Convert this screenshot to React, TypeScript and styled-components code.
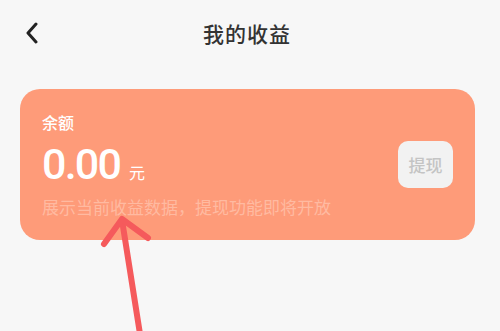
import React from "react";
import styled, { createGlobalStyle } from "styled-components";

const GlobalStyle = createGlobalStyle`
  html, body {
    margin: 0;
    padding: 0;
    background: #f7f7f7;
    font-family: "Noto Sans CJK SC", "Noto Sans", sans-serif;
  }
`;

const Page = styled.div`
  position: relative;
  width: 500px;
  height: 331px;
  overflow: hidden;
  background: #f7f7f7;
`;

const Header = styled.div`
  height: 66px;
  display: flex;
  align-items: center;
  justify-content: center;
  position: relative;
`;

const BackButton = styled.button`
  position: absolute;
  left: 20px;
  top: 20px;
  width: 24px;
  height: 26px;
  padding: 0;
  border: none;
  background: none;
  display: flex;
  align-items: center;
  justify-content: center;
`;

const Title = styled.h1`
  margin: 0 6px 0 0;
  font-size: 21px;
  font-weight: 500;
  color: #333;
  letter-spacing: 1px;
`;

const Card = styled.div`
  margin: 23px 25px 0 20px;
  height: 151px;
  box-sizing: border-box;
  border-radius: 20px;
  background: #fe9b79;
  padding: 22px 22px 0 22px;
  display: flex;
  justify-content: space-between;
`;

const Info = styled.div`
  display: flex;
  flex-direction: column;
`;

const Label = styled.div`
  font-size: 16px;
  line-height: 22px;
  color: #fff;
  font-weight: 500;
`;

const AmountRow = styled.div`
  display: flex;
  align-items: baseline;
  gap: 9px;
  margin-top: 6px;
  height: 50px;
`;

const Amount = styled.span`
  font-family: Roboto, "Noto Sans", sans-serif;
  font-size: 43px;
  font-weight: 500;
  line-height: 50px;
  color: #fff;
  letter-spacing: -1.8px;
`;

const Unit = styled.span`
  font-size: 16px;
  color: #fff;
`;

const Hint = styled.div`
  margin-top: 7px;
  font-size: 17px;
  line-height: 22px;
  color: #ffbaa1;
`;

const WithdrawButton = styled.button`
  align-self: center;
  margin-top: -22px;
  width: 55px;
  height: 47px;
  border: none;
  border-radius: 10px;
  background: #f2f2f2;
  color: #c4c4c4;
  font-family: "Noto Sans CJK SC", sans-serif;
  font-size: 17px;
  font-weight: 500;
  padding: 0;
`;

const Overlay = styled.svg`
  position: absolute;
  left: 0;
  top: 0;
  pointer-events: none;
`;

export default function App() {
  return (
    <Page>
      <GlobalStyle />
      <Header>
        <BackButton>
          <svg width="14" height="22" viewBox="0 0 14 22">
            <path
              d="M11 2 L3 11 L11 20"
              fill="none"
              stroke="#222"
              strokeWidth="3"
              strokeLinecap="round"
              strokeLinejoin="round"
            />
          </svg>
        </BackButton>
        <Title>我的收益</Title>
      </Header>
      <Card>
        <Info>
          <Label>余额</Label>
          <AmountRow>
            <Amount>0.00</Amount>
            <Unit>元</Unit>
          </AmountRow>
          <Hint>展示当前收益数据，提现功能即将开放</Hint>
        </Info>
        <WithdrawButton>提现</WithdrawButton>
      </Card>
      <Overlay width="500" height="331" viewBox="0 0 500 331">
        <g
          fill="none"
          stroke="#f55a5c"
          strokeWidth="6"
          strokeLinecap="round"
          strokeLinejoin="round"
        >
          <path d="M140 334 L122 220" />
          <path d="M104 244 L122 219 L148 238" />
        </g>
      </Overlay>
    </Page>
  );
}
